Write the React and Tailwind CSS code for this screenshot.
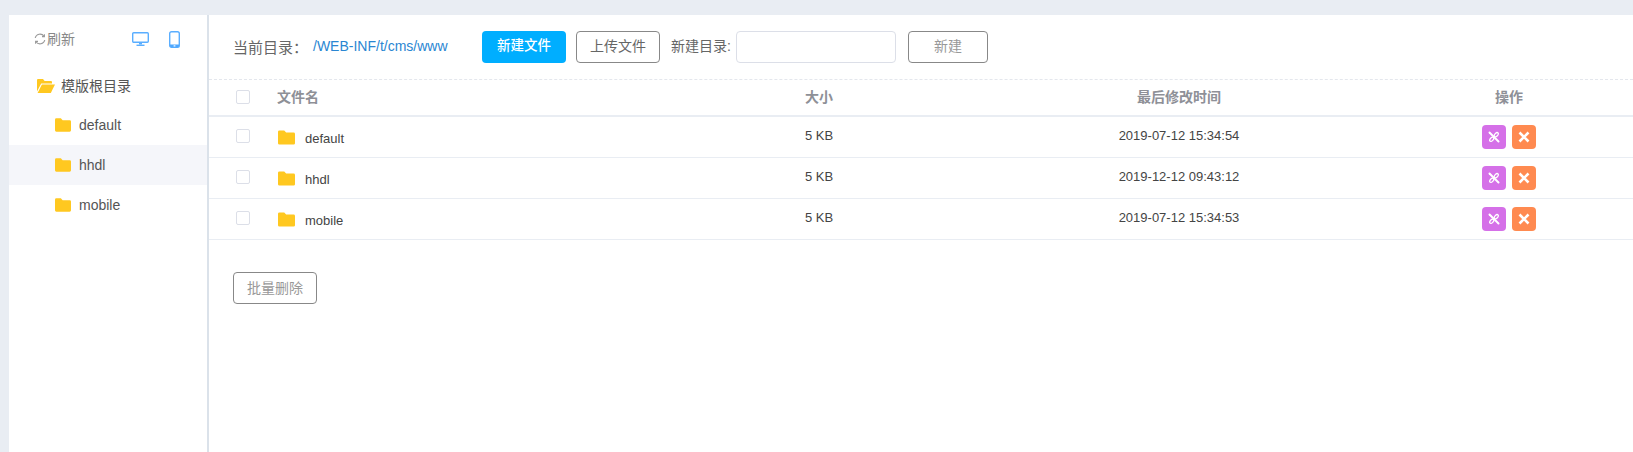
import React from 'react';

const FONT = 'font-["Liberation_Sans","Noto_Sans_CJK_SC",sans-serif]';

const SIDE_ITEMS = ['default', 'hhdl', 'mobile'];

const FILES = [
    { name: 'default', size: '5 KB', time: '2019-07-12 15:34:54' },
    { name: 'hhdl', size: '5 KB', time: '2019-12-12 09:43:12' },
    { name: 'mobile', size: '5 KB', time: '2019-07-12 15:34:53' },
];

function Folder({ className }) {
    return (
        <svg viewBox="0 0 18 15" className={className}>
            <path d="M1.5 0H6.6L8.6 2.2H16.5A1.5 1.5 0 0 1 18 3.7V13.5A1.5 1.5 0 0 1 16.5 15H1.5A1.5 1.5 0 0 1 0 13.5V1.5A1.5 1.5 0 0 1 1.5 0Z" fill="#ffc820" />
        </svg>
    );
}

function FolderOpen({ className }) {
    return (
        <svg viewBox="0 0 18 14" className={className}>
            <path d="M1 0H6L7.6 2H14A1 1 0 0 1 15 3V4.4H4.2L0 12.4V1A1 1 0 0 1 1 0Z" fill="#ffc820" />
            <path d="M4.9 5.4H18L13.8 14H0.6Z" fill="#ffc820" />
        </svg>
    );
}

function Refresh() {
    return (
        <svg viewBox="0 0 12 12" className="w-[12px] h-[12px]" fill="none" stroke="#999" strokeWidth="1.1">
            <path d="M1.2 5A4.9 4.9 0 0 1 10 3.2" />
            <path d="M10.8 7A4.9 4.9 0 0 1 2 8.8" />
            <path d="M10.4 1.2V3.6H8" />
            <path d="M1.6 10.8V8.4H4" />
        </svg>
    );
}

function MonitorIcon() {
    return (
        <svg viewBox="0 0 17 14" className="w-[17px] h-[14px]" fill="none">
            <rect x="0.7" y="0.7" width="15.6" height="9.6" rx="1" stroke="#5aaeff" strokeWidth="1.4" />
            <path d="M7 10.5H10V12.5H7Z" fill="#5aaeff" />
            <path d="M4.5 12.6H12.5V14H4.5Z" fill="#5aaeff" />
        </svg>
    );
}

function PhoneIcon() {
    return (
        <svg viewBox="0 0 11 17" className="w-[11px] h-[17px]" fill="none">
            <rect x="0.7" y="0.7" width="9.6" height="15.6" rx="1.8" stroke="#5aaeff" strokeWidth="1.4" />
            <path d="M1 13.4H10V15A1.6 1.6 0 0 1 8.4 16.4H2.6A1.6 1.6 0 0 1 1 15Z" fill="#4ea8ff" />
            <rect x="4.6" y="14.3" width="1.8" height="1.2" fill="white" />
        </svg>
    );
}

function Check() {
    return <span className="block w-[14px] h-[14px] bg-white border border-[#dcdfe8] rounded-[2px]" />;
}

function Unlink() {
    return (
        <svg viewBox="0 0 14 14" className="w-[14px] h-[14px]" fill="none" stroke="white" strokeLinecap="round">
            <path d="M2.5 2.5 11.5 11.5" strokeWidth="2" />
            <ellipse cx="9.3" cy="4.7" rx="2.5" ry="1.5" transform="rotate(-45 9.3 4.7)" strokeWidth="1.3" />
            <ellipse cx="4.7" cy="9.3" rx="2.5" ry="1.5" transform="rotate(-45 4.7 9.3)" strokeWidth="1.3" />
        </svg>
    );
}

function Cross() {
    return (
        <svg viewBox="0 0 12 12" className="w-[12px] h-[12px]" fill="none" stroke="white" strokeWidth="2.6">
            <path d="M1.5 1.5 10.5 10.5M10.5 1.5 1.5 10.5" />
        </svg>
    );
}

function Sidebar() {
    return (
        <aside className="w-[200px] shrink-0 bg-white border-r-2 border-[#dbe2ea]">
            <div className="flex items-center pl-[25px] h-[48px]">
                <Refresh />
                <span className="ml-[1px] text-[14px] text-[#888] leading-[20px]">刷新</span>
                <span className="ml-[57px]"><MonitorIcon /></span>
                <span className="ml-[20px]"><PhoneIcon /></span>
            </div>
            <div className="flex items-center h-[42px] pt-[4px] pl-[28px]">
                <FolderOpen className="w-[18px] h-[14px]" />
                <span className="ml-[6px] text-[14px] text-[#555]">模版根目录</span>
            </div>
            <div>
                {SIDE_ITEMS.map(name => (
                    <div key={name} className={`flex items-center h-[40px] pl-[46px] ${name === 'hhdl' ? 'bg-[#f5f6fa]' : ''}`}>
                        <Folder className="w-[16px] h-[14px]" />
                        <span className="ml-[8px] text-[14px] text-[#555]">{name}</span>
                    </div>
                ))}
            </div>
        </aside>
    );
}

const COLS = 'grid grid-cols-[68px_528px_168px_412px_248px] items-center';

export default function App() {
    return (
        <div className={`flex w-[1633px] h-[452px] overflow-hidden bg-[#e9edf3] pt-[15px] pl-[9px] ${FONT}`}>
            <Sidebar />
            <main className="flex-1 bg-white">
                <div className="flex items-center h-[65px] pl-[24px] pb-[1px] border-b border-dashed border-[#e4e7ed]">
                    <span className="w-[80px] text-[15px] text-[#666] mt-[4px]">当前目录：</span>
                    <span className="w-[169px] text-[14px] text-[#2a86d2]">/WEB-INF/t/cms/www</span>
                    <button className="w-[84px] h-[32px] rounded-[4px] bg-[#00aeff] text-white text-[13.5px] font-medium">新建文件</button>
                    <button className="w-[84px] h-[32px] ml-[10px] rounded-[4px] bg-white border border-[#888] text-[#666] text-[14px]">上传文件</button>
                    <span className="ml-[11px] w-[65px] text-[14px] text-[#666]">新建目录:</span>
                    <input className="w-[160px] h-[32px] rounded-[4px] border border-[#dcdfe8] outline-none" />
                    <button className="w-[80px] h-[32px] ml-[12px] rounded-[4px] bg-white border border-[#888] text-[#999] text-[14px]">新建</button>
                </div>

                <div className={`${COLS} h-[37px] pb-[1px] border-b-2 border-[#e9edf3] text-[14px] font-bold text-[#8e9097]`}>
                    <div className="pl-[27px]"><Check /></div>
                    <div>文件名</div>
                    <div>大小</div>
                    <div className="text-center">最后修改时间</div>
                    <div className="text-center">操作</div>
                </div>

                {FILES.map(f => (
                    <div key={f.name} className={`${COLS} h-[41px] border-b border-[#e9edf3] text-[13px] text-[#444]`}>
                        <div className="pl-[27px] pb-[2px]"><Check /></div>
                        <div className="flex items-center pl-[1px] pt-[1px]">
                            <Folder className="w-[17px] h-[15px]" />
                            <span className="ml-[10px] text-[13px] mt-[2px]">{f.name}</span>
                        </div>
                        <div className="pb-[2px]">{f.size}</div>
                        <div className="text-center pb-[2px]">{f.time}</div>
                        <div className="flex justify-center gap-[6px]">
                            <button className="flex items-center justify-center w-[24px] h-[24px] rounded-[4px] bg-[#d570e8]"><Unlink /></button>
                            <button className="flex items-center justify-center w-[24px] h-[24px] rounded-[4px] bg-[#ff8a50]"><Cross /></button>
                        </div>
                    </div>
                ))}

                <div className="pl-[24px] pt-[32px]">
                    <button className="w-[84px] h-[32px] rounded-[4px] bg-white border border-[#888] text-[#999] text-[14px]">批量删除</button>
                </div>
            </main>
        </div>
    );
}
